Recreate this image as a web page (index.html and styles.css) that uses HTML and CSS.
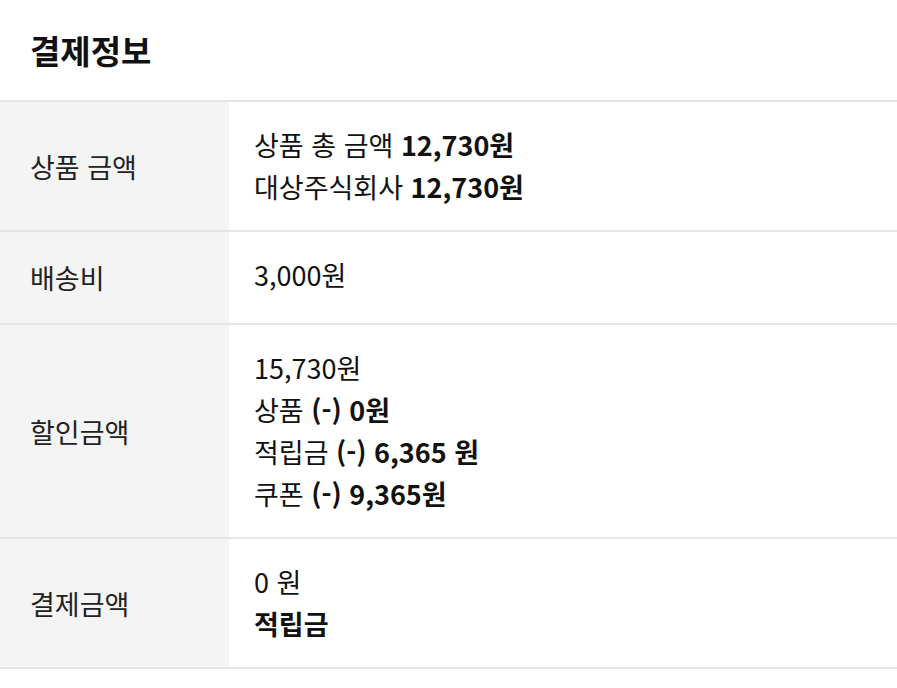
FILE: index.html
```html
<!DOCTYPE html>
<html lang="ko">
<head>
    <meta charset="UTF-8">
    <meta name="viewport" content="width=device-width, initial-scale=1.0">
    <title>결제정보</title>
    <link rel="stylesheet" href="styles.css">
</head>
<body>
    <h2 class="title">결제정보</h2>

    <div class="pay-table">
        <div class="row">
            <div class="label">상품 금액</div>
            <div class="value">
                <p>상품 총 금액 <b>12,730원</b></p>
                <p>대상주식회사 <b>12,730원</b></p>
            </div>
        </div>
        <div class="row">
            <div class="label">배송비</div>
            <div class="value value-short">
                <p>3,000원</p>
            </div>
        </div>
        <div class="row">
            <div class="label">할인금액</div>
            <div class="value">
                <p>15,730원</p>
                <p>상품 <b>(-) 0원</b></p>
                <p>적립금 <b>(-) 6,365 원</b></p>
                <p>쿠폰 <b>(-) 9,365원</b></p>
            </div>
        </div>
        <div class="row">
            <div class="label">결제금액</div>
            <div class="value">
                <p>0 원</p>
                <p><b>적립금</b></p>
            </div>
        </div>
    </div>
</body>
</html>
```

FILE: styles.css
```css
body {
    margin: 0;
    background-color: #fff;
    color: #111;
    font-family: "Noto Sans CJK KR", "Noto Sans", sans-serif;
}
.title {
    margin: 0;
    padding-left: 30px;
    height: 100px;
    line-height: 100px;
    font-size: 33px;
    font-weight: bold;
}
.pay-table {
    border-top: 2px solid #e6e6e6;
}
.row {
    display: flex;
    border-bottom: 2px solid #e6e6e6;
}
.label {
    width: 199px;
    flex-shrink: 0;
    display: flex;
    align-items: center;
    padding-left: 30px;
    background-color: #f4f4f4;
    font-size: 27px;
    color: #222;
}
.value {
    flex: 1;
    padding: 22px 25px;
    font-size: 27px;
    line-height: 42px;
}
.value-short {
    padding-bottom: 27px;
}
.value p {
    margin: 0;
}
.value b {
    font-weight: bold;
}
```
